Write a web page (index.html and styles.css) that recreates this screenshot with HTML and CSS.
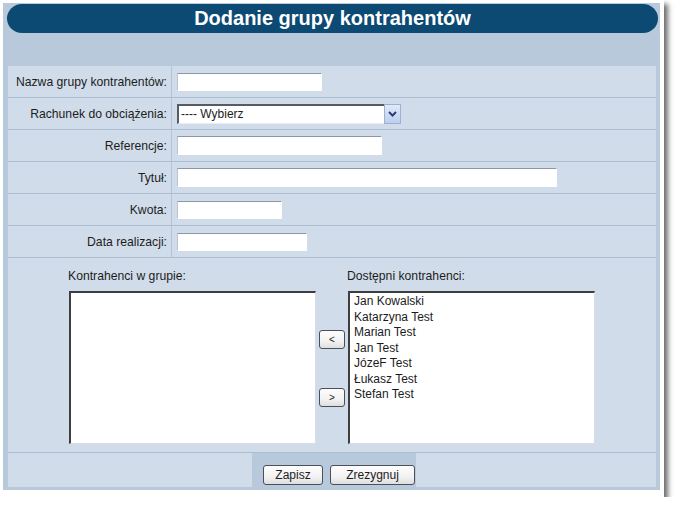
FILE: index.html
```html
<!DOCTYPE html>
<html lang="pl">
<head>
<meta charset="utf-8">
<title>Dodanie grupy kontrahentów</title>
<link rel="stylesheet" href="styles.css">
</head>
<body>
<div class="frame">
  <div class="panel">
    <div class="title">Dodanie grupy kontrahentów</div>
    <div class="form">
      <div class="row">
        <div class="label">Nazwa grupy kontrahentów:</div>
        <div class="field"><input class="text w-nazwa" type="text"></div>
      </div>
      <div class="row">
        <div class="label">Rachunek do obciążenia:</div>
        <div class="field">
          <div class="select">
            <span class="select-text">---- Wybierz</span>
            <span class="select-btn"><svg width="9" height="6" viewBox="0 0 9 6"><path d="M1 1 L4.5 4.5 L8 1" fill="none" stroke="#2a3f73" stroke-width="2"/></svg></span>
          </div>
        </div>
      </div>
      <div class="row">
        <div class="label">Referencje:</div>
        <div class="field"><input class="text w-ref" type="text"></div>
      </div>
      <div class="row">
        <div class="label">Tytuł:</div>
        <div class="field"><input class="text w-tytul" type="text"></div>
      </div>
      <div class="row">
        <div class="label">Kwota:</div>
        <div class="field"><input class="text w-kwota" type="text"></div>
      </div>
      <div class="row">
        <div class="label">Data realizacji:</div>
        <div class="field"><input class="text w-data" type="text"></div>
      </div>
      <div class="lists">
        <div class="list-col">
          <div class="list-label">Kontrahenci w grupie:</div>
          <div class="listbox"></div>
        </div>
        <div class="move-col">
          <button class="btn move">&lt;</button>
          <button class="btn move">&gt;</button>
        </div>
        <div class="list-col">
          <div class="list-label">Dostępni kontrahenci:</div>
          <div class="listbox">
            <div class="item">Jan Kowalski</div>
            <div class="item">Katarzyna Test</div>
            <div class="item">Marian Test</div>
            <div class="item">Jan Test</div>
            <div class="item">JózeF Test</div>
            <div class="item">Łukasz Test</div>
            <div class="item">Stefan Test</div>
          </div>
        </div>
      </div>
      <div class="actions">
        <div class="side"></div>
        <div class="buttons">
          <button class="btn act w-zapisz">Zapisz</button>
          <button class="btn act w-zrez">Zrezygnuj</button>
        </div>
        <div class="side"></div>
      </div>
    </div>
  </div>
</div>
</body>
</html>
```
FILE: styles.css
```css
* { box-sizing: border-box; }
html, body { margin: 0; padding: 0; background: #ffffff; }
body {
  font-family: "Liberation Sans", Arial, sans-serif;
  font-size: 12.2px;
  color: #1c1c1c;
}
.frame {
  width: 664px;
  height: 497px;
  background: #ffffff;
  box-shadow: 4px 4px 5px rgba(60, 60, 60, 0.75);
  padding: 3px 0 0 3px;
}
.panel {
  width: 657px;
  height: 487px;
  background: #b7c9da;
  padding-top: 1px;
}
.title {
  margin-left: 4px;
  width: 651px;
  height: 29px;
  border-radius: 15px / 14.5px;
  background: #0c4a73;
  color: #ffffff;
  font-weight: bold;
  font-size: 20px;
  line-height: 29px;
  text-align: center;
}
.form {
  margin: 33px 0 0 5px;
  width: 648px;
  background: #d1dcea;
}
.row {
  display: flex;
  height: 32px;
  border-bottom: 1px solid #adbed1;
}
.label {
  width: 164px;
  border-right: 1px solid #b3c3d5;
  display: flex;
  align-items: center;
  justify-content: flex-end;
  padding-right: 4px;
  white-space: nowrap;
}
.field {
  flex: 1;
  display: flex;
  align-items: center;
  padding-left: 5px;
}
.text {
  height: 19px;
  margin: 0;
  padding: 0 2px;
  background: #ffffff;
  border: 1px solid #ffffff;
  border-top-color: #8b98a6;
  border-left-color: #b9c4cf;
  outline: none;
  font: inherit;
}
.w-nazwa { width: 145px; height: 18px; }
.w-ref { width: 205px; }
.w-tytul { width: 380px; }
.w-kwota { width: 105px; height: 18px; }
.w-data { width: 130px; height: 18px; }
.select {
  width: 224px;
  height: 20px;
  display: flex;
  background: #ffffff;
  border-top: 2px solid #555c63;
  border-left: 2px solid #555c63;
  border-bottom: 1px solid #e8edf3;
}
.select-text {
  flex: 1;
  padding-left: 2px;
  line-height: 17px;
  font-size: 12px;
}
.select-btn {
  width: 17px;
  margin-top: -2px;
  height: 20px;
  background: linear-gradient(#e1e9f8, #bccfee);
  border: 1px solid #9cb0d3;
  display: flex;
  align-items: center;
  justify-content: center;
}
.lists {
  display: flex;
  gap: 3px;
  height: 195px;
  padding: 11px 0 0 61px;
  border-bottom: 1px solid #adbed1;
}
.list-col {
  width: 247px;
  display: flex;
  flex-direction: column;
}
.list-label {
  height: 15px;
  line-height: 15px;
  margin-left: -1px;
  margin-bottom: 7px;
  white-space: nowrap;
}
.listbox {
  height: 153px;
  background: #ffffff;
  border-top: 2px solid #3e3e3e;
  border-left: 2px solid #3e3e3e;
  border-right: 1px solid #d7dde4;
  border-bottom: 1px solid #d7dde4;
  padding: 1px 0 0 4px;
  font-size: 12px;
}
.item {
  line-height: 15.5px;
  height: 15.5px;
  white-space: nowrap;
}
.move-col {
  width: 26px;
  display: flex;
  flex-direction: column;
  gap: 39px;
  padding-top: 61px;
}
.btn {
  margin: 0;
  padding: 0;
  font-family: "Liberation Sans", Arial, sans-serif;
  font-size: 12px;
  color: #1c1c1c;
  background: linear-gradient(#fdfdfd, #f2f2f2 60%, #dedede);
  border: 1px solid #4a5058;
  border-radius: 3px;
  cursor: pointer;
}
.move {
  width: 26px;
  height: 19px;
  font-size: 10px;
  line-height: 17px;
}
.actions {
  display: flex;
  height: 34px;
}
.side { flex: 1; }
.actions .side:first-child { flex: 0 0 244px; }
.buttons {
  width: 164px;
  background: #b7c9da;
  display: flex;
  gap: 7px;
  padding: 12px 0 0 11px;
}
.act { height: 20px; }
.w-zapisz { width: 60px; }
.w-zrez { width: 85px; }
```
